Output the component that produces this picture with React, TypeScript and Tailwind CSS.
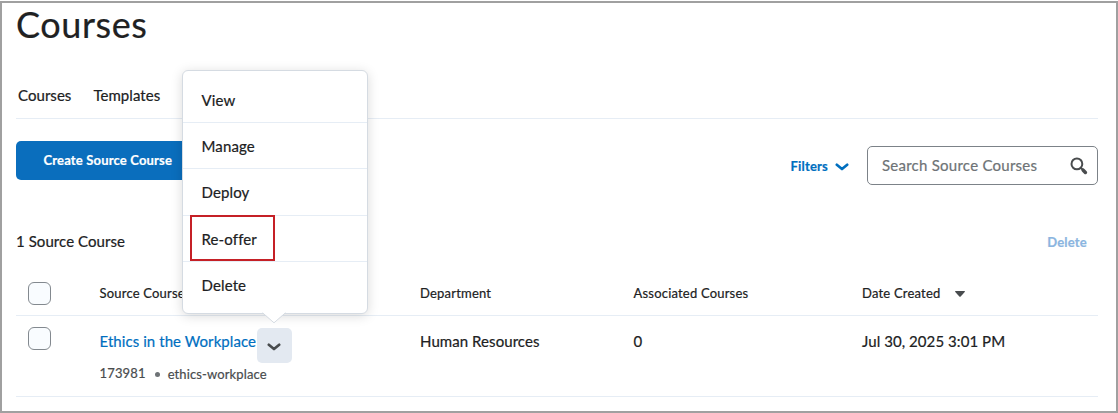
import React from 'react';

const menuItems = ['View', 'Manage', 'Deploy', 'Re-offer', 'Delete'];

function Chevron({ className }: { className: string }) {
  return (
    <svg viewBox="0 0 14 8" className={className} fill="none" stroke="currentColor" strokeWidth="2.7" strokeLinecap="round" strokeLinejoin="round">
      <path d="M1.8 1.8 7 6l5.2-4.2" />
    </svg>
  );
}

function Checkbox({ label }: { label: string }) {
  return (
    <button role="checkbox" aria-checked="false" aria-label={label} className="block h-[23px] w-[23px] rounded-[6px] border border-[#83898f] bg-[#f9fcff]" />
  );
}

function ActionsMenu() {
  return (
    <div className="absolute -left-[75px] -top-[258px] z-10 h-[244px] w-[186px] rounded-[6px] border-[1.5px] border-[#d5dbe2] bg-white shadow-[0_2px_12px_rgba(0,0,0,0.15)]">
      <ul className="flex flex-col pt-[6px]">
        {menuItems.map((item, i) => (
          <li
            key={item}
            className={
              'relative flex h-[46.2px] items-center pl-[19px] pt-[2px] text-[15px] tracking-[0.13px] text-[#202122] ' +
              (i < menuItems.length - 1 ? 'border-b border-[#e6edf5]' : '')
            }
          >
            {item}
            {item === 'Re-offer' && <span className="absolute left-[7px] -top-px h-[46px] w-[85px] border-2 border-[#c52026]" />}
          </li>
        ))}
      </ul>
      <svg viewBox="0 0 24 12" className="absolute -bottom-[11px] left-[79px] h-3 w-6">
        <path d="M0 0h24L12 10.5z" fill="#fff" />
        <path d="M0.5 .8 12 10.8 23.5 .8" fill="none" stroke="#d5dbe2" />
      </svg>
    </div>
  );
}

export default function App() {
  return (
    <div className="h-[413px] w-[1118px] overflow-hidden bg-white pt-px font-['Lato',sans-serif] text-[#202122] [-webkit-text-stroke:0.2px]">
      <main className="h-[412px] border-2 border-[#a0a0a0] pl-[14px] pr-[18px]">
        <h1 className="h-[67px] text-[36px] leading-[43px] tracking-[0.6px]">Courses</h1>
        <nav className="flex h-[49px] gap-[22px] border-b border-[#e6edf5] pl-[2px] pt-[13px] text-[15px] leading-6 tracking-[0.05px]">
          <a>Courses</a>
          <a>Templates</a>
        </nav>
        <div className="flex h-[110px] items-start justify-between pt-[22px]">
          <button className="h-[39px] w-[185px] rounded-[5px] bg-[#0a6ebd] pl-[27.5px] text-left text-[13px] font-bold tracking-[0.17px] whitespace-nowrap text-white">
            Create Source Course
          </button>
          <div className="flex items-center pt-[5px]">
            <button className="flex items-center gap-[7px] pt-[2px] text-[13px] font-bold tracking-[0.2px] text-[#006fbf]">
              Filters
              <Chevron className="h-2 w-[14px]" />
            </button>
            <div className="ml-[18px] flex h-[39px] w-[231px] items-center justify-between rounded-[5px] border border-[#7c8288] pl-[14px] pr-[9px] text-[15px] tracking-[0.25px] text-[#6e7376]">
              <span>Search Source Courses</span>
              <svg viewBox="0 0 18 18" className="h-[18px] w-[18px]" fill="none" stroke="#494c4e" strokeLinecap="round">
                <circle cx="6.9" cy="6.9" r="5.4" strokeWidth="2" />
                <path d="m11 11 1.8 1.8" strokeWidth="2" />
                <path d="m13.2 13.2 2.2 2.2" strokeWidth="3.5" />
              </svg>
            </div>
          </div>
        </div>
        <div className="flex h-[43px] justify-between pr-[11px] leading-6">
          <span className="text-[15px] tracking-[0.07px]">1 Source Course</span>
          <button className="h-6 pt-px text-[13px] font-bold tracking-[0.2px] text-[#8bb5e0]">Delete</button>
        </div>
        <section>
          <div className="grid h-[44px] grid-cols-[83.5px_320.5px_213.5px_228.5px_1fr] border-b border-[#e6edf5] text-[13px] leading-[43px] tracking-[0.2px]">
            <div className="pl-[12.4px] pt-[10px]"><Checkbox label="Select all" /></div>
            <span>Source Course</span>
            <span>Department</span>
            <span>Associated Courses</span>
            <span className="flex items-center gap-[15px]">
              Date Created
              <svg viewBox="0 0 10 6" className="h-[6px] w-[10px]"><path d="M0.5 0h9q.7.3.2 1L5.7 5.5q-.7.7-1.4 0L.3 1Q-.2.3.5 0" fill="#494c4e" /></svg>
            </span>
          </div>
          <div className="grid h-[81px] grid-cols-[83.5px_320.5px_213.5px_228.5px_1fr] border-b border-[#e6edf5] text-[15px] leading-[51px] tracking-[0.07px]">
            <div className="pl-[12.4px] pt-[11px]"><Checkbox label="Select Ethics in the Workplace" /></div>
            <div>
              <div className="flex h-[47px]">
                <a className="w-[157px] whitespace-nowrap text-[#006fbf]">Ethics in the Workplace</a>
                <div className="relative mt-[12px] h-[35px] w-[35px]">
                  <button aria-label="Actions" className="flex h-[35px] w-[35px] items-center justify-center rounded-[5px] bg-[#e3e9f1] text-[#494c4e]">
                    <Chevron className="mt-[3px] h-2 w-[14px]" />
                  </button>
                  <ActionsMenu />
                </div>
              </div>
              <div className="flex items-center text-[13px] leading-[22px] tracking-[0.12px] text-[#494c4e]">
                <span className="-mt-[2px] tracking-[0.15px]">173981</span>
                <span className="ml-[9px] mr-[8px] h-[5px] w-[5px] rounded-full bg-[#6e7376]" />
                <span>ethics-workplace</span>
              </div>
            </div>
            <span>Human Resources</span>
            <span>0</span>
            <span>Jul 30, 2025 3:01 PM</span>
          </div>
        </section>
      </main>
    </div>
  );
}
